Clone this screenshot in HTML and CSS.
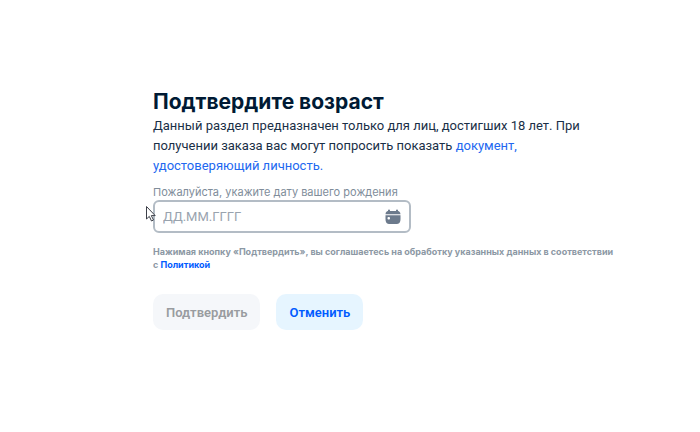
FILE: index.html
```html
<!DOCTYPE html>
<html lang="ru">
<head>
<meta charset="utf-8">
<meta name="viewport" content="width=device-width, initial-scale=1">
<title>Подтвердите возраст</title>
<link rel="stylesheet" href="styles.css">
</head>
<body>
<main class="page">
  <form class="age">
    <h1 class="title">Подтвердите возраст</h1>
    <p class="lead">Данный раздел предназначен только для лиц, достигших 18 лет. При получении заказа вас могут попросить показать <a href="#document">документ, удостоверяющий личность.</a></p>
    <label class="label" for="birth">Пожалуйста, укажите дату вашего рождения</label>
    <div class="field">
      <input class="input" id="birth" type="text" inputmode="numeric" placeholder="ДД.ММ.ГГГГ">
      <svg class="calendar" viewBox="0 0 16 16" aria-hidden="true">
        <path fill="#6c7a8c" d="M3 1.500a1 1 0 0 1 2 0V2h6v-.5a1 1 0 0 1 2 0v.6c1.400.2 2.300 1.200 2.500 3.100H.5C.7 3.300 1.600 2.300 3 2.100z"/>
        <path fill="#6c7a8c" fill-rule="evenodd" d="M.5 6.200h15V10c0 3.700-1.500 5-4.500 5H5C2 15 .5 13.700.5 10zM3.400 8a.9.9 0 0 0-.9.9v.7a.9.9 0 0 0 .9.9h.7a.9.9 0 0 0 .9-.9v-.7a.9.9 0 0 0-.9-.9z"/>
      </svg>
      <svg class="cursor" viewBox="0 0 12 18" aria-hidden="true">
        <path fill="#fff" stroke="#3c3f48" stroke-linejoin="round" d="M1.500 1.500v12.500l2.800-2.600 2.200 4.600 2-1-2.200-4.400h3.900z"/>
      </svg>
    </div>
    <p class="note">Нажимая кнопку «Подтвердить», вы соглашаетесь на обработку указанных данных в соответствии с&nbsp;<a href="#policy">Политикой</a></p>
    <div class="actions">
      <button class="button" type="submit" disabled>Подтвердить</button>
      <button class="button button-cancel" type="button">Отменить</button>
    </div>
  </form>
</main>
</body>
</html>
```
FILE: styles.css
```css
* {
  box-sizing: border-box;
}

body {
  margin: 0;
  background: #fff;
  color: #001a34;
  font-family: Inter, "Noto Sans", sans-serif;
}

.page {
  display: flex;
  justify-content: center;
  padding: 88px 16px 40px 92px;
}

.age {
  width: 100%;
  max-width: 470px;
}

.title {
  margin: 0;
  font-size: 21px;
  line-height: 28px;
  font-weight: 700;
}

.lead {
  margin: 0 0 8px;
  color: #1a2f47;
  font-family: Roboto, Inter, sans-serif;
  font-size: 13px;
  line-height: 20px;
}

a {
  color: #005bff;
  text-decoration: none;
}

.lead a {
  color: #2268f0;
}

.label {
  display: block;
  font-size: 11px;
  line-height: 16px;
  color: #808d9a;
}

.field {
  position: relative;
  display: flex;
  align-items: center;
  max-width: 258px;
}

.input {
  width: 100%;
  height: 33px;
  padding: 0 36px 0 8px;
  border: 2px solid #b3bcc5;
  border-radius: 6px;
  background: #fff;
  color: #001a34;
  font-family: Roboto, Inter, sans-serif;
  font-size: 13px;
}

.input::placeholder {
  color: #99a3ae;
  opacity: 1;
}

.calendar {
  position: absolute;
  right: 10px;
  width: 16px;
  height: 16px;
}

.cursor {
  position: absolute;
  left: -8px;
  top: 5px;
  width: 12px;
  height: 18px;
}

.note {
  margin: 12px 0 23px;
  font-size: 9px;
  line-height: 13px;
  font-weight: 700;
  color: #8c98a4;
}

.actions {
  display: flex;
  gap: 16px;
}

.button {
  height: 36px;
  padding: 0 13px;
  border: 0;
  border-radius: 10px;
  background: #f5f7fa;
  color: #999ca0;
  font-family: Roboto, Inter, sans-serif;
  font-size: 13px;
  font-weight: 600;
}

.button-cancel {
  background: #e6f5ff;
  color: #005bff;
}
```
